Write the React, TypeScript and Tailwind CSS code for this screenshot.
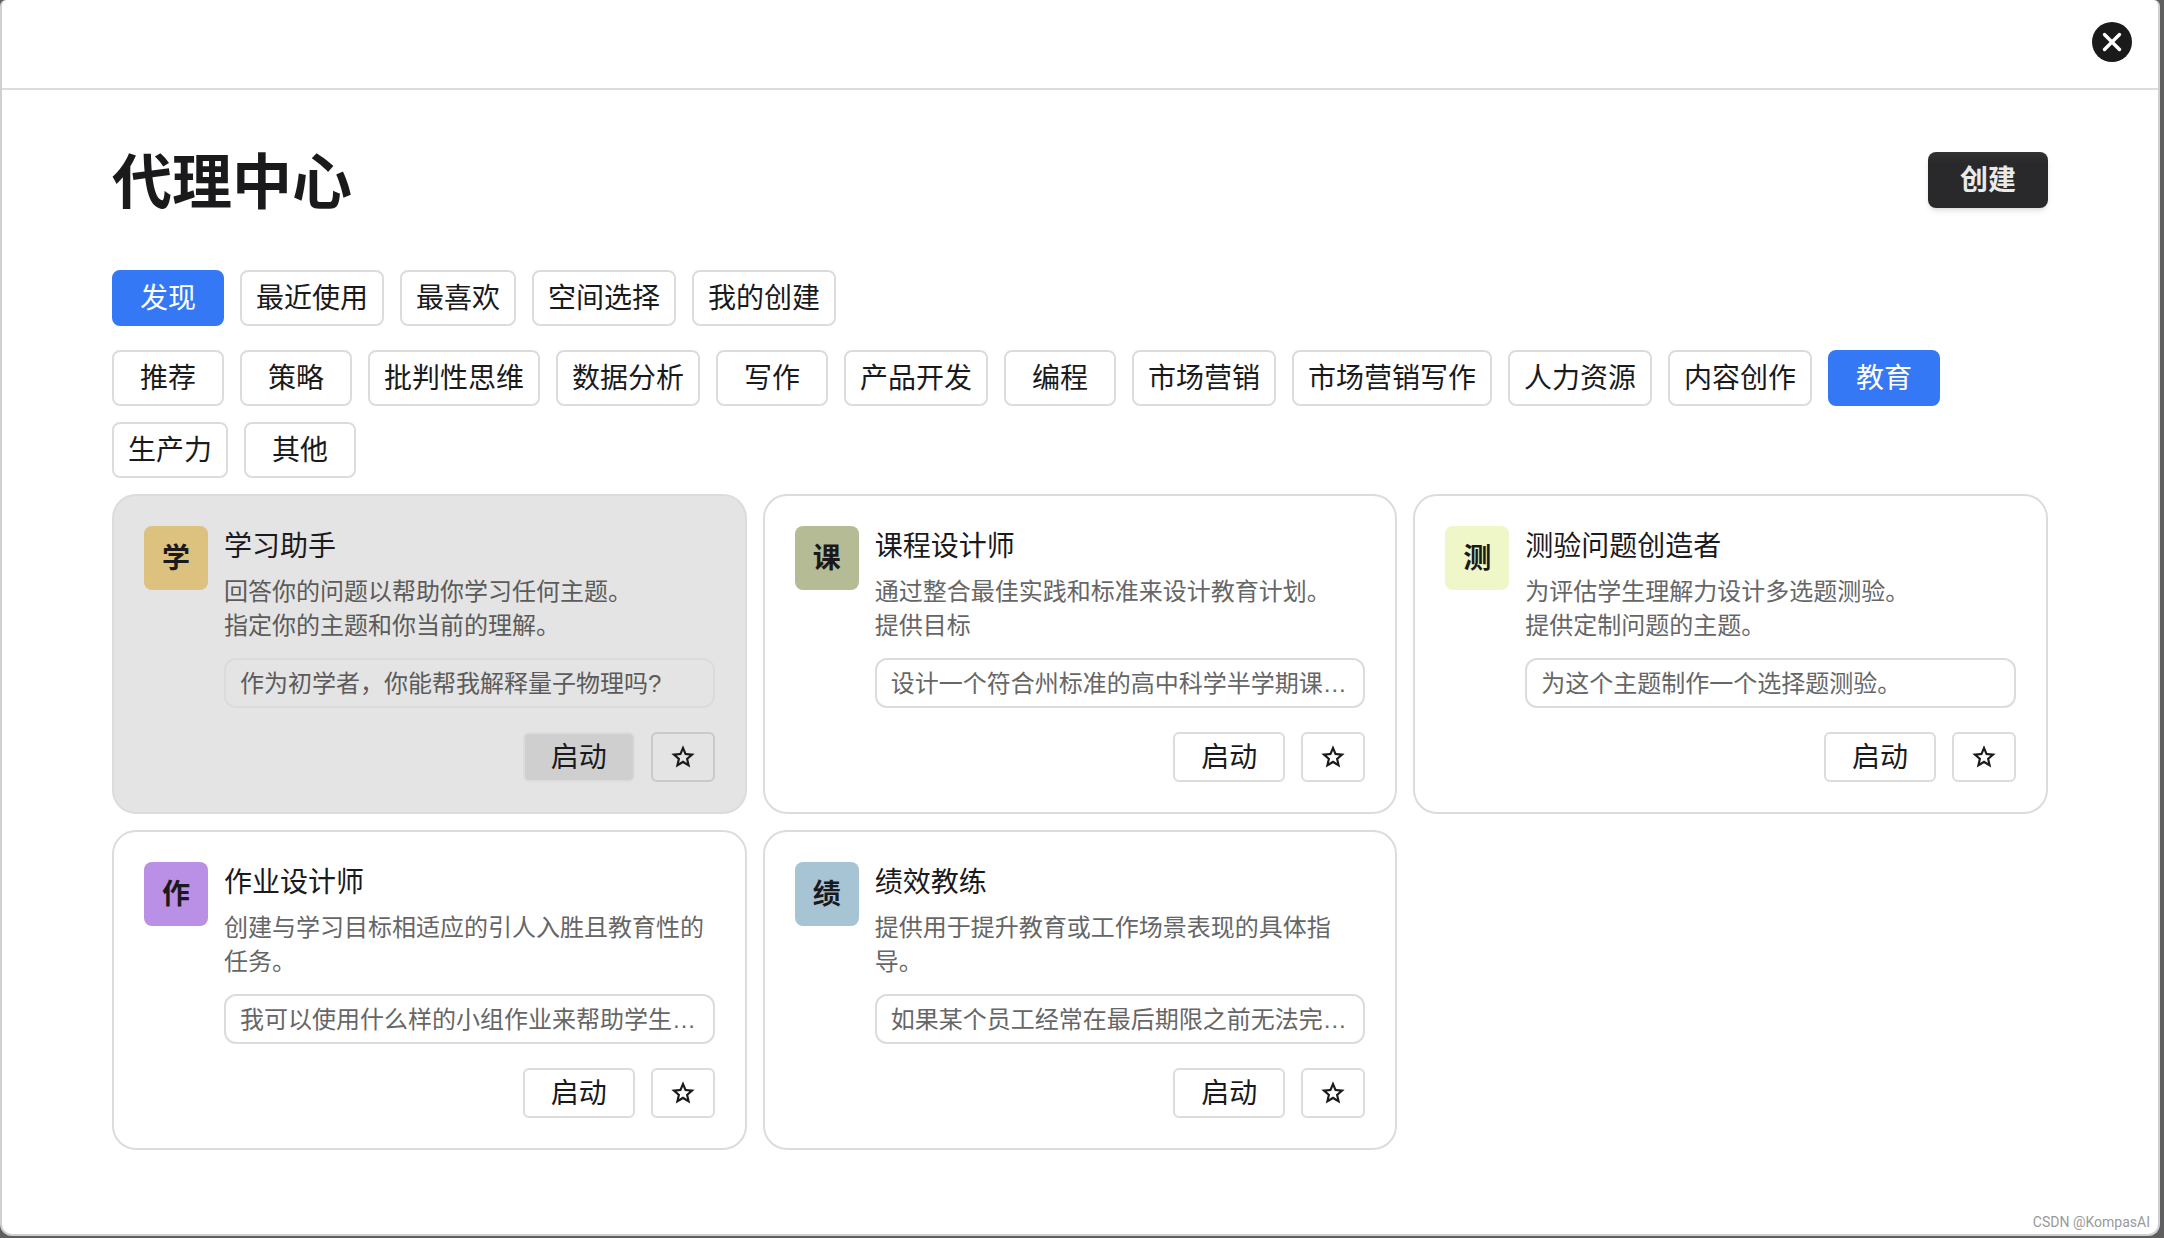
import { X } from 'lucide-react';
import clsx from 'clsx';

interface Agent {
  name: string;
  initial: string;
  color: string;
  description: string[];
  prompt: string;
  active?: boolean;
}

const views = ['发现', '最近使用', '最喜欢', '空间选择', '我的创建'];

const categories = [
  '推荐',
  '策略',
  '批判性思维',
  '数据分析',
  '写作',
  '产品开发',
  '编程',
  '市场营销',
  '市场营销写作',
  '人力资源',
  '内容创作',
  '教育',
  '生产力',
  '其他',
];

const agents: Agent[] = [
  {
    name: '学习助手',
    initial: '学',
    color: 'bg-[#dcc17f]',
    description: ['回答你的问题以帮助你学习任何主题。', '指定你的主题和你当前的理解。'],
    prompt: '作为初学者，你能帮我解释量子物理吗?',
    active: true,
  },
  {
    name: '课程设计师',
    initial: '课',
    color: 'bg-[#b5bb95]',
    description: ['通过整合最佳实践和标准来设计教育计划。', '提供目标'],
    prompt: '设计一个符合州标准的高中科学半学期课…',
  },
  {
    name: '测验问题创造者',
    initial: '测',
    color: 'bg-[#eff6c8]',
    description: ['为评估学生理解力设计多选题测验。', '提供定制问题的主题。'],
    prompt: '为这个主题制作一个选择题测验。',
  },
  {
    name: '作业设计师',
    initial: '作',
    color: 'bg-[#ba90e6]',
    description: ['创建与学习目标相适应的引人入胜且教育性的任务。'],
    prompt: '我可以使用什么样的小组作业来帮助学生…',
  },
  {
    name: '绩效教练',
    initial: '绩',
    color: 'bg-[#a6c4d3]',
    description: ['提供用于提升教育或工作场景表现的具体指导。'],
    prompt: '如果某个员工经常在最后期限之前无法完…',
  },
];

function StarIcon() {
  return (
    <svg viewBox="0 0 24 24" className="size-7" fill="currentColor" fillRule="evenodd" aria-hidden="true">
      <path d="M12 2l2.81 6.62 7.19.62-5.46 4.73L18.18 21 12 17.27 5.82 21l1.64-7.03L2 9.24l7.19-.62zM12 6.7l-1.55 3.65-3.95.34 3 2.6-.9 3.86L12 15.1l3.4 2.05-.9-3.86 3-2.6-3.95-.34z" />
    </svg>
  );
}

function Chip({ label, selected }: { label: string; selected: boolean }) {
  return (
    <button
      type="button"
      aria-pressed={selected}
      className={clsx(
        'h-14 min-w-28 rounded-lg border-2 px-3.5 pt-0.5 text-[28px] leading-10',
        selected ? 'border-[#3478f6] bg-[#3478f6] text-white' : 'border-[#dcdcdc] bg-white text-[#1a1a1c]'
      )}
    >
      {label}
    </button>
  );
}

function AgentCard({ name, initial, color, description, prompt, active }: Agent) {
  return (
    <article
      className={clsx(
        'flex items-start gap-4 rounded-3xl border-2 border-[#dcdcdc] p-[30px]',
        active ? 'bg-[#e4e4e4]' : 'bg-white'
      )}
    >
      <div
        className={clsx(
          'flex size-16 shrink-0 items-center justify-center rounded-lg pt-0.5 text-[28px] font-bold text-[#1a1a1c]',
          color
        )}
      >
        {initial}
      </div>
      <div className="min-w-0 flex-1">
        <h2 className="pt-px text-[28px] leading-10 text-[#1a1a1c]">{name}</h2>
        <div className={clsx('mt-2 min-h-[68px] text-2xl leading-[34px]', active ? 'text-[#5b5b5b]' : 'text-[#666]')}>
          {description.map((line) => (
            <p key={line}>{line}</p>
          ))}
        </div>
        <button
          type="button"
          className={clsx(
            'mt-[15px] block h-[50px] w-full truncate rounded-xl border-2 px-3.5 pt-0.5 text-left text-2xl leading-[34px]',
            active ? 'border-[#dbdbdb] text-[#5b5b5b]' : 'border-[#dcdcdc] text-[#666]'
          )}
        >
          {prompt}
        </button>
        <div className="mt-6 flex justify-end gap-4">
          <button
            type="button"
            className={clsx(
              'h-[50px] w-28 rounded-md border-2 border-[#dcdcdc] pt-0.5 text-[28px] leading-10 text-[#1a1a1c]',
              active && 'bg-[#cfcfcf]'
            )}
          >
            启动
          </button>
          <button
            type="button"
            aria-label={`收藏${name}`}
            className={clsx(
              'flex h-[50px] w-16 items-center justify-center rounded-md border-2 text-[#1a1a1c]',
              active ? 'border-[#c9c9c9]' : 'border-[#dcdcdc]'
            )}
          >
            <StarIcon />
          </button>
        </div>
      </div>
    </article>
  );
}

export default function App() {
  return (
    <div
      lang="zh-CN"
      className="flex min-h-screen flex-col bg-[#5f5f5f] pr-1 pb-0.5 font-['Liberation_Sans','Noto_Sans_CJK_SC',sans-serif]"
    >
      <div
        role="dialog"
        aria-labelledby="agent-center-title"
        className="relative flex-1 rounded-t-md rounded-b-xl border-2 border-t-0 border-[#d0d0d0] bg-white"
      >
        <header className="flex justify-end border-b-2 border-[#dcdcdc] px-[26px] pt-[22px] pb-[26px]">
          <button
            type="button"
            aria-label="关闭"
            className="flex size-10 items-center justify-center rounded-full bg-[#1a1a1a] text-white"
          >
            <X className="size-[30px]" strokeWidth={2.75} />
          </button>
        </header>

        <main className="px-[110px] pt-12">
          <div className="flex items-center justify-between">
            <h1 id="agent-center-title" className="pt-2 text-6xl leading-[76px] font-bold text-[#1a1a1c]">
              代理中心
            </h1>
            <button
              type="button"
              className="h-14 w-[120px] rounded-lg bg-linear-to-b from-[#333333] to-[#29292b] to-20% pt-0.5 text-[28px] font-bold text-[#eaeaea] shadow-md"
            >
              创建
            </button>
          </div>

          <nav aria-label="视图" className="mt-12 flex flex-wrap gap-4">
            {views.map((label) => (
              <Chip key={label} label={label} selected={label === '发现'} />
            ))}
          </nav>
          <nav aria-label="分类" className="mt-6 flex flex-wrap gap-4">
            {categories.map((label) => (
              <Chip key={label} label={label} selected={label === '教育'} />
            ))}
          </nav>

          <section className="mt-4 grid grid-cols-3 gap-4">
            {agents.map((agent) => (
              <AgentCard key={agent.name} {...agent} />
            ))}
          </section>
        </main>

        <span className="absolute right-2 bottom-0.5 font-[Roboto,sans-serif] text-sm text-[#999]">
          CSDN @KompasAI
        </span>
      </div>
    </div>
  );
}
